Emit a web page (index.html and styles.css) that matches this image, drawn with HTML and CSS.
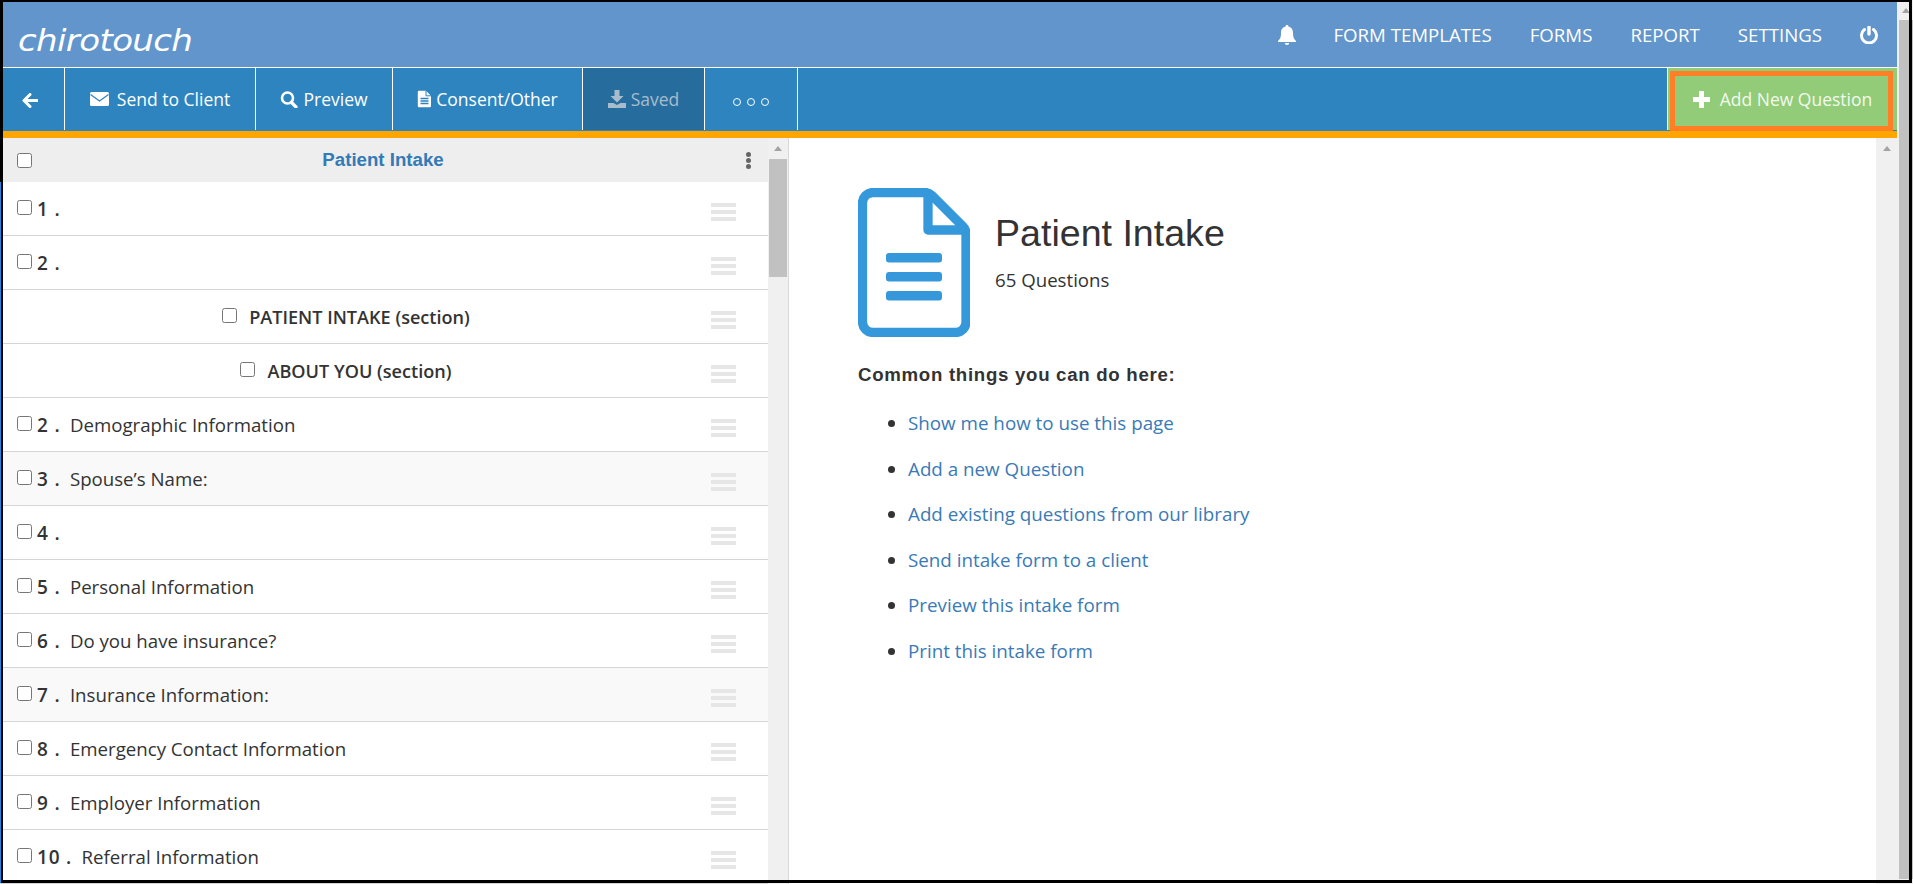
FILE: index.html
```html
<!DOCTYPE html>
<html lang="en">
<head>
    <meta charset="UTF-8">
    <title>Patient Intake</title>
    <link rel="stylesheet" href="styles.css">
</head>
<body>
    <div class="shot">
        <div class="app">
            <header class="topbar">
                <a class="logo">chirotouch</a>
                <nav class="topnav">
                    <svg class="icon-bell" viewBox="0 0 18 20"><path d="M9 0a1.4 1.4 0 0 1 1.4 1.6C13.2 2.2 15 4.4 15 7.4c0 5 1 6.600 3 8.600v1H0v-1c2-2 3-3.600 3-8.600 0-3 1.800-5.200 4.600-5.800A1.400 1.400 0 0 1 9 0z" fill="#fff"/><path d="M6.800 18h4.400a2.200 2 0 0 1-4.400 0z" fill="#fff"/></svg>
                    <a>FORM TEMPLATES</a>
                    <a>FORMS</a>
                    <a>REPORT</a>
                    <a>SETTINGS</a>
                    <svg class="icon-power" viewBox="0 0 20 18"><path d="M5.500 3.500a7.500 7.500 0 1 0 9 0" fill="none" stroke="#fff" stroke-width="3" stroke-linecap="round"/><path d="M10 1v7" stroke="#fff" stroke-width="3.400" stroke-linecap="round"/></svg>
                </nav>
            </header>

            <div class="toolbar">
                <a class="tool tool-back">
                    <svg width="16" height="15" viewBox="0 0 16 15"><path d="M8 1.500L2 7.500l6 6M2.500 7.500H15" fill="none" stroke="#fff" stroke-width="3" stroke-linecap="round" stroke-linejoin="round"/></svg>
                </a>
                <a class="tool tool-send">
                    <svg width="19" height="14" viewBox="0 0 19 14"><rect width="19" height="14" rx="1.500" fill="#fff"/><path d="M0.500 2.500l9 6.500 9-6.500" fill="none" stroke="#2d84bf" stroke-width="1.200"/></svg>
                    Send to Client
                </a>
                <a class="tool tool-preview">
                    <svg width="19" height="17" viewBox="0 0 19 17"><circle cx="7.500" cy="7" r="5.500" fill="none" stroke="#fff" stroke-width="2.600"/><path d="M11.500 11.500l4.500 4.500" stroke="#fff" stroke-width="3.200" stroke-linecap="round"/></svg>
                    Preview
                </a>
                <a class="tool tool-consent">
                    <svg width="15" height="18" viewBox="0 0 15 18"><path d="M2 .8h7l5 5v10.200a1.200 1.200 0 0 1-1.200 1.200H2A1.200 1.200 0 0 1 .8 16V2A1.200 1.200 0 0 1 2 .8z" fill="#fff"/><path d="M9 .8v5h5" fill="none" stroke="#2d84bf" stroke-width="1"/><path d="M3.500 8.500h8M3.500 11h8M3.500 13.500h8" stroke="#2d84bf" stroke-width="1.300"/></svg>
                    Consent/Other
                </a>
                <a class="tool tool-saved">
                    <svg width="18" height="18" viewBox="0 0 18 18"><path d="M6.500 0h5v6h4L9 12.500 2.500 6h4z" fill="#a9bccb"/><path d="M0 13h5.500L9 15l3.500-2H18v5H0z" fill="#a9bccb"/></svg>
                    Saved
                </a>
                <a class="tool tool-more">
                    <span class="ring"></span><span class="ring"></span><span class="ring"></span>
                </a>
                <a class="tool-add">
                    <svg width="17" height="17" viewBox="0 0 17 17"><path d="M6 0h5v6h6v5h-6v6H6v-6H0V6h6z" fill="#fff"/></svg>
                    Add New Question
                </a>
            </div>
            <div class="accent"></div>

            <div class="workspace">
                <section class="questions">
                    <div class="list">
                        <div class="list-head">
                            <input type="checkbox">
                            <span class="list-title">Patient Intake</span>
                            <span class="kebab"><i></i><i></i><i></i></span>
                        </div>

                        <div class="row"><div class="row-main"><input type="checkbox"><span class="num">1 .</span></div><span class="grip"><i></i><i></i><i></i></span></div>
                        <div class="row"><div class="row-main"><input type="checkbox"><span class="num">2 .</span></div><span class="grip"><i></i><i></i><i></i></span></div>
                        <div class="row"><div class="row-main section"><input type="checkbox"><span>PATIENT INTAKE (section)</span></div><span class="grip"><i></i><i></i><i></i></span></div>
                        <div class="row"><div class="row-main section"><input type="checkbox"><span>ABOUT YOU (section)</span></div><span class="grip"><i></i><i></i><i></i></span></div>
                        <div class="row"><div class="row-main"><input type="checkbox"><span class="num">2 .</span><span class="label">Demographic Information</span></div><span class="grip"><i></i><i></i><i></i></span></div>
                        <div class="row alt"><div class="row-main"><input type="checkbox"><span class="num">3 .</span><span class="label">Spouse’s Name:</span></div><span class="grip"><i></i><i></i><i></i></span></div>
                        <div class="row"><div class="row-main"><input type="checkbox"><span class="num">4 .</span></div><span class="grip"><i></i><i></i><i></i></span></div>
                        <div class="row"><div class="row-main"><input type="checkbox"><span class="num">5 .</span><span class="label">Personal Information</span></div><span class="grip"><i></i><i></i><i></i></span></div>
                        <div class="row"><div class="row-main"><input type="checkbox"><span class="num">6 .</span><span class="label">Do you have insurance?</span></div><span class="grip"><i></i><i></i><i></i></span></div>
                        <div class="row alt"><div class="row-main"><input type="checkbox"><span class="num">7 .</span><span class="label">Insurance Information:</span></div><span class="grip"><i></i><i></i><i></i></span></div>
                        <div class="row"><div class="row-main"><input type="checkbox"><span class="num">8 .</span><span class="label">Emergency Contact Information</span></div><span class="grip"><i></i><i></i><i></i></span></div>
                        <div class="row"><div class="row-main"><input type="checkbox"><span class="num">9 .</span><span class="label">Employer Information</span></div><span class="grip"><i></i><i></i><i></i></span></div>
                        <div class="row"><div class="row-main"><input type="checkbox"><span class="num">10 .</span><span class="label">Referral Information</span></div><span class="grip"><i></i><i></i><i></i></span></div>
                    </div>
                    <div class="track track-list"><span class="arrow"></span><span class="thumb"></span></div>
                </section>

                <section class="detail">
                    <div class="detail-body">
                        <div class="form-head">
                            <svg class="doc-icon" viewBox="0 0 112 149"><path d="M15 4.500h52c3 0 5 1 7 3l31 31c2 2 3 4 3 7V134a10.500 10.500 0 0 1-10.500 10.500H15A10.500 10.500 0 0 1 4.500 134V15A10.500 10.500 0 0 1 15 4.500z" fill="none" stroke="#3498db" stroke-width="9.300"/><path d="M70 5v37a4 4 0 0 0 0 0h37" fill="none" stroke="#3498db" stroke-width="9.300" stroke-linejoin="round"/><rect x="28" y="65" width="56" height="9.500" rx="3" fill="#3498db"/><rect x="28" y="84" width="56" height="9.500" rx="3" fill="#3498db"/><rect x="28" y="103" width="56" height="9.500" rx="3" fill="#3498db"/></svg>
                            <div class="form-info">
                                <h1>Patient Intake</h1>
                                <p>65 Questions</p>
                            </div>
                        </div>
                        <h4>Common things you can do here:</h4>
                        <ul class="tips">
                            <li><a>Show me how to use this page</a></li>
                            <li><a>Add a new Question</a></li>
                            <li><a>Add existing questions from our library</a></li>
                            <li><a>Send intake form to a client</a></li>
                            <li><a>Preview this intake form</a></li>
                            <li><a>Print this intake form</a></li>
                        </ul>
                    </div>
                    <div class="track track-detail"><span class="arrow"></span></div>
                </section>
            </div>
        </div>
        <div class="track track-page"><span class="arrow"></span><span class="thumb"></span></div>

        <div class="callout"></div>
        <div class="frame"></div>
    </div>
</body>
</html>
```

FILE: styles.css
```css
html, body {
    margin: 0;
    height: 100%;
    overflow: hidden;
    background: #fff;
}
body {
    font-family: "Open Sans", sans-serif;
    font-size: 18.67px;
    color: #333;
}
.shot {
    position: relative;
    display: flex;
    width: 1913px;
    height: 884px;
    overflow: hidden;
}
.app {
    flex: 0 0 1897px;
    display: flex;
    flex-direction: column;
    height: 884px;
}

/* top bar */
.topbar {
    flex: 0 0 67px;
    display: flex;
    align-items: center;
    justify-content: space-between;
    background: #6195cb;
    border-bottom: 1px solid #fff;
}
.logo {
    margin: 12px 0 0 18px;
    font-family: "DejaVu Sans", sans-serif;
    font-style: italic;
    font-size: 31px;
    line-height: 30px;
    letter-spacing: -0.6px;
    color: #fff;
    transform: scaleX(1.1);
    transform-origin: left center;
}
.topnav {
    display: flex;
    align-items: center;
    margin: 2px 18px 0 0;
    color: #fff;
}
.topnav a {
    margin-right: 38px;
}
.icon-bell {
    width: 18px;
    height: 20px;
    margin-right: 37px;
}
.icon-power {
    width: 20px;
    height: 18px;
    margin-left: -1px;
}

/* toolbar */
.toolbar {
    flex: 0 0 62px;
    display: flex;
    background: #2d84bf;
    border-bottom: 1px solid #2d84bf;
    color: #fff;
    font-size: 17.5px;
}
.tool {
    display: flex;
    align-items: center;
    justify-content: center;
    box-sizing: border-box;
    gap: 5px;
    border-right: 1px solid #fff;
}
.tool-back { width: 65px; padding-right: 5px; padding-top: 2px; }
.tool-send { width: 191px; gap: 8px; }
.tool-preview { width: 137px; gap: 4px; }
.tool-consent { width: 190px; gap: 4px; }
.tool-saved {
    width: 122px;
    background: #266d9e;
    color: #a9bccb;
}
.tool-more {
    width: 93px;
    gap: 6px;
    padding-top: 5px;
}
.ring {
    width: 6px;
    height: 6px;
    border: 1px solid #fff;
    border-radius: 50%;
}
.tool-add {
    display: flex;
    align-items: center;
    justify-content: center;
    gap: 10px;
    box-sizing: border-box;
    width: 230px;
    margin-left: auto;
    background: #92cc78;
    border-left: 1px solid #fff;
    color: rgba(255, 255, 255, 0.9);
}
.accent {
    flex: 0 0 7px;
    background: #ffa500;
}

/* question list */
.workspace {
    flex: 1;
    display: flex;
    min-height: 0;
}
.questions {
    flex: 0 0 789px;
    display: flex;
    box-sizing: border-box;
    border-right: 1px solid #d8d8d8;
}
.list {
    flex: 0 0 768px;
    overflow: hidden;
}
.list-head {
    display: flex;
    align-items: center;
    height: 44px;
    padding-left: 17px;
    background: #eee;
}
.list-head input,
.row input {
    flex: none;
    width: 15px;
    height: 15px;
    margin: 0;
}
.list-title {
    flex: 1;
    padding-right: 12px;
    text-align: center;
    font-family: "Liberation Sans", sans-serif;
    font-size: 18.67px;
    font-weight: bold;
    color: #337ab7;
}
.kebab {
    display: flex;
    flex-direction: column;
    gap: 1px;
    margin-right: 17px;
}
.kebab i {
    width: 5px;
    height: 5px;
    border-radius: 50%;
    background: #666;
}
.row {
    display: flex;
    align-items: center;
    box-sizing: border-box;
    height: 54px;
    border-bottom: 1px solid #d5d5d5;
}
.row.alt {
    background: #f9f9f9;
}
.row-main {
    flex: 0 0 690px;
    display: flex;
    align-items: center;
    box-sizing: border-box;
    padding-left: 17px;
}
.row-main input {
    margin-top: -2px;
}
.row-main.section {
    justify-content: center;
    padding-left: 2px;
    font-size: 18.1px;
    font-weight: 600;
}
.row-main.section input {
    margin: -3px 12px 0 0;
}
.num {
    margin-left: 5px;
    font-weight: 600;
    font-size: 19px;
    letter-spacing: 0.8px;
    white-space: pre;
}
.label {
    margin-left: 9.5px;
}
.grip {
    display: flex;
    flex-direction: column;
    gap: 3px;
    margin: 6px 0 0 21px;
}
.grip i {
    width: 25px;
    height: 4px;
    background: #e6e6e6;
}

/* scrollbars */
.track {
    display: flex;
    flex-direction: column;
    align-items: center;
    background: #f0f0f0;
}
.arrow {
    flex: none;
    width: 0;
    height: 0;
    margin-top: 8px;
    border: 4.500px solid transparent;
    border-top: 0;
    border-bottom: 5px solid #a3a3a3;
}
.thumb {
    flex: none;
    background: #c1c1c1;
}
.track-list {
    flex: 0 0 20px;
}
.track-list .thumb {
    width: 18px;
    height: 118px;
    margin-top: 8px;
}
.track-detail {
    flex: 0 0 21px;
}
.track-page {
    flex: 0 0 16px;
    align-items: flex-start;
    height: 884px;
}
.track-page .arrow {
    margin-left: 5px;
}
.track-page .thumb {
    width: 14px;
    height: 859px;
    margin: 7px 0 0 2px;
}

/* detail panel */
.detail {
    flex: 1;
    display: flex;
}
.detail-body {
    flex: 1;
    padding: 50px 0 0 69px;
}
.form-head {
    display: flex;
    gap: 25px;
}
.doc-icon {
    flex: none;
    width: 112px;
    height: 149px;
}
.form-info {
    padding-top: 20.5px;
}
.form-info h1 {
    margin: 0;
    font-family: "Liberation Sans", sans-serif;
    font-size: 37.6px;
    font-weight: 400;
    line-height: 48px;
}
.form-info p {
    margin: 11px 0 0;
    line-height: 24px;
}
h4 {
    margin: 25.5px 0 0;
    font-family: "Liberation Sans", sans-serif;
    font-size: 18.67px;
    font-weight: bold;
    line-height: 24px;
    letter-spacing: 0.7px;
}
.tips {
    margin: 14.5px 0 0;
    padding-left: 50px;
    list-style: disc;
    font-size: 18.8px;
}
.tips li {
    height: 45.500px;
    line-height: 45px;
}
.tips a {
    color: #3a7ab6;
}

/* annotation box and screenshot outline, both drawn over the page */
.callout {
    position: absolute;
    left: 1670px;
    top: 71px;
    width: 213px;
    height: 50px;
    border: 5px solid #ff7f27;
}
.frame {
    position: absolute;
    left: 0;
    top: 0;
    box-sizing: border-box;
    width: 1912px;
    height: 883px;
    border: 3px solid #000;
    border-top-width: 2px;
    pointer-events: none;
}
.frame::before {
    content: "";
    position: absolute;
    left: -3px;
    top: 180px;
    bottom: -3px;
    width: 1px;
    background: #1e88e5;
}
```
